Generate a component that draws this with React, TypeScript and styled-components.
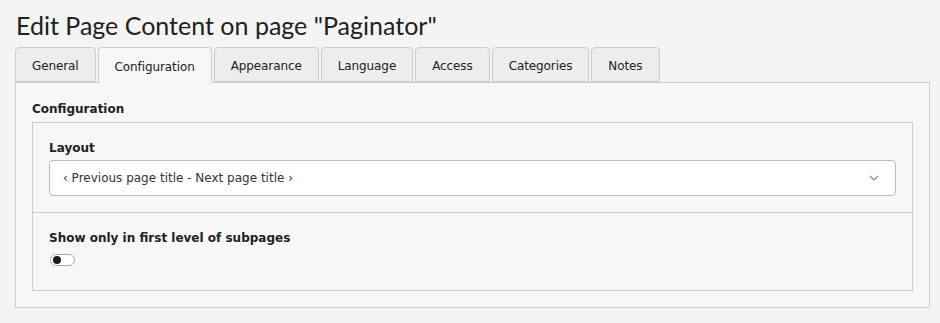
import styled, { createGlobalStyle } from "styled-components";

const GlobalStyle = createGlobalStyle`
  html, body {
    margin: 0;
    padding: 0;
    background-color: #f4f4f4;
  }
  body {
    font-family: "DejaVu Sans", Verdana, sans-serif;
    font-size: 12px;
    color: #212121;
  }
`;

const Page = styled.div`
  padding: 6px 10px 16px 15px;
`;

const Title = styled.h1`
  margin: 0 0 0 1px;
  font-family: Lato, "Noto Sans", sans-serif;
  font-weight: 400;
  font-size: 25px;
  line-height: 38px;
  color: #212121;
  height: 41px;
`;

const TabBar = styled.div`
  display: flex;
  gap: 2px;
  position: relative;
  z-index: 1;
`;

const Tab = styled.div<{ $active?: boolean }>`
  padding: 3px 16px 0;
  box-sizing: border-box;
  display: flex;
  align-items: center;
  border: 1px solid #cccccc;
  border-bottom: ${(p) => (p.$active ? "none" : "1px solid #cccccc")};
  border-radius: 4px 4px 0 0;
  background-color: ${(p) => (p.$active ? "#f7f7f7" : "#ededed")};
  margin-bottom: ${(p) => (p.$active ? "-1px" : "0")};
  color: #212121;
  line-height: 1;
  height: ${(p) => (p.$active ? "36px" : "35px")};
  letter-spacing: -0.1px;
`;

const Panel = styled.div`
  border: 1px solid #cccccc;
  background-color: #f7f7f7;
  padding: 17px 16px 16px;
`;

const PanelHeading = styled.div`
  font-weight: 700;
  line-height: 18px;
  margin-bottom: 4px;
`;

const FieldGroup = styled.div`
  border: 1px solid #cccccc;
`;

const Field = styled.div<{ $last?: boolean }>`
  padding: 16px 16px ${(p) => (p.$last ? "24px" : "16px")};
  border-top: ${(p) => (p.$last ? "1px solid #cccccc" : "none")};
`;

const Label = styled.div`
  font-weight: 700;
  line-height: 18px;
  margin-bottom: 3px;
`;

const Select = styled.div`
  height: 34px;
  border: 1px solid #bbbbbb;
  border-radius: 4px;
  background-color: #ffffff;
  display: flex;
  align-items: center;
  justify-content: space-between;
  padding: 0 16px 0 13px;
  color: #333333;
`;

const Toggle = styled.div`
  margin: 7px 0 0 1px;
  width: 19px;
  height: 10px;
  border: 1px solid #aaaaaa;
  border-radius: 6px;
  background-color: #ffffff;
  display: flex;
  align-items: center;
  padding: 0 2px;
`;

const Knob = styled.div`
  width: 8px;
  height: 8px;
  border-radius: 50%;
  background-color: #1a1a1a;
`;

const tabs = [
  "General",
  "Configuration",
  "Appearance",
  "Language",
  "Access",
  "Categories",
  "Notes",
];

export default function App() {
  return (
    <>
      <GlobalStyle />
      <Page>
        <Title>Edit Page Content on page "Paginator"</Title>
        <TabBar>
          {tabs.map((t) => (
            <Tab key={t} $active={t === "Configuration"}>
              {t}
            </Tab>
          ))}
        </TabBar>
        <Panel>
          <PanelHeading>Configuration</PanelHeading>
          <FieldGroup>
            <Field>
              <Label>Layout</Label>
              <Select>
                <span>‹ Previous page title - Next page title ›</span>
                <svg width="10" height="6" viewBox="0 0 10 6">
                  <path
                    d="M1 1 L5 5 L9 1"
                    fill="none"
                    stroke="#888888"
                    strokeWidth="1.2"
                  />
                </svg>
              </Select>
            </Field>
            <Field $last>
              <Label>Show only in first level of subpages</Label>
              <Toggle>
                <Knob />
              </Toggle>
            </Field>
          </FieldGroup>
        </Panel>
      </Page>
    </>
  );
}
